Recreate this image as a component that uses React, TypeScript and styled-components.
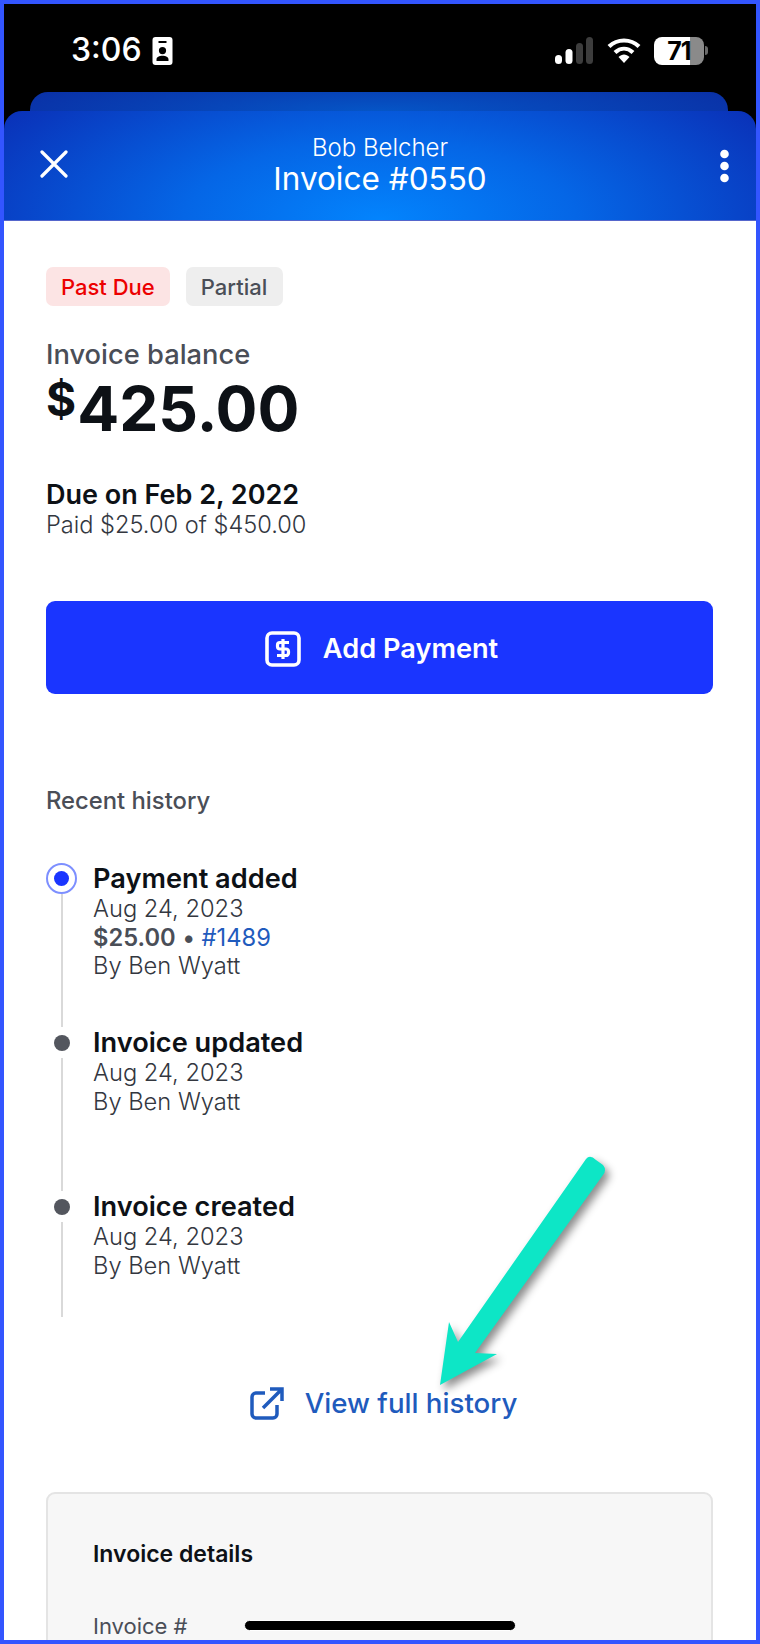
import React from 'react';
import styled, { createGlobalStyle } from 'styled-components';

const GlobalStyle = createGlobalStyle`
  html, body {
    margin: 0;
    padding: 0;
    background: #fff;
  }
  * {
    box-sizing: border-box;
  }
`;

const Frame = styled.div`
  position: relative;
  width: 760px;
  height: 1644px;
  overflow: hidden;
  border: 4px solid #3355ff;
  background: #fff;
  font-family: Inter, 'Liberation Sans', sans-serif;
  color: #0d1116;
`;

const Top = styled.div`
  background: #000;
`;

const StatusBar = styled.div`
  height: 88px;
  display: flex;
  justify-content: space-between;
  padding: 29px 48px 0 67px;
  color: #fff;
`;

const StatusGroup = styled.div`
  display: flex;
  align-items: flex-start;
`;

const Clock = styled.span`
  font-size: 32px;
  line-height: 34px;
  font-weight: 500;
  margin-right: 10px;
`;

const StatusIcon = styled.svg<{ $gap?: number }>`
  margin: 4px 0 0 ${(p) => p.$gap ?? 0}px;
`;

const Battery = styled.div`
  position: relative;
  width: 50px;
  height: 28px;
  margin: 4px 0 0 13px;
  border-radius: 8px;
  overflow: hidden;
  background: linear-gradient(to right, #fff 72%, #8a8a8a 72%);
  color: #000;
  font-size: 25px;
  line-height: 28px;
  font-weight: 700;
  text-align: center;
  letter-spacing: -1px;
`;

const BatteryNub = styled.div`
  width: 3px;
  height: 9px;
  margin: 13px 0 0 1px;
  border-radius: 0 3px 3px 0;
  background: #6a6a6a;
`;

const BackTab = styled.div`
  height: 19px;
  margin: 0 28px 0 26px;
  border-radius: 18px 18px 0 0;
  background: radial-gradient(ellipse 60% 220% at 50% 100%, #0555c6 0%, #0a2ea4 100%);
`;

const Header = styled.header`
  height: 110px;
  display: grid;
  grid-template-columns: 1fr auto 1fr;
  align-items: center;
  padding: 0 36px;
  border-radius: 18px 18px 0 0;
  border-bottom: 1px solid #5566cc;
  background: radial-gradient(ellipse 62% 175% at 50% 100%, #0384fd 0%, #0566e6 42%, #0a2fb6 100%);
  color: #fff;
`;

const CloseIcon = styled.svg`
  margin-bottom: 3px;
`;

const MoreIcon = styled.svg`
  justify-self: end;
  margin-right: -9px;
`;

const HeaderTitle = styled.div`
  display: flex;
  flex-direction: column;
  align-items: center;
  margin-bottom: 2px;
`;

const Customer = styled.span`
  font-size: 24px;
  line-height: 28px;
  font-weight: 300;
`;

const InvoiceNumber = styled.span`
  font-size: 31.500px;
  line-height: 33px;
  font-weight: 400;
`;

const Main = styled.main`
  padding: 46px 43px 0 42px;
`;

const Badges = styled.div`
  display: flex;
  gap: 16px;
`;

const Badge = styled.span<{ $tone: 'danger' | 'neutral' }>`
  height: 39px;
  display: flex;
  align-items: center;
  padding: 0 ${(p) => (p.$tone === 'danger' ? 15 : 16)}px 0 15px;
  border-radius: 7px;
  font-size: 22px;
  font-weight: 500;
  background: ${(p) => (p.$tone === 'danger' ? '#fce4e4' : '#eeeeee')};
  color: ${(p) => (p.$tone === 'danger' ? '#ec0000' : '#4a4e57')};
`;

const BalanceLabel = styled.div`
  margin-top: 32px;
  font-size: 27.300px;
  line-height: 34px;
  font-weight: 500;
  color: #4a4e57;
`;

const BalanceAmount = styled.div`
  display: flex;
  align-items: flex-start;
  height: 64px;
  margin-top: 5px;
  font-size: 62.200px;
  line-height: 64px;
  font-weight: 700;
`;

const Currency = styled.span`
  font-size: 46px;
  line-height: 44px;
  margin-right: 1px;
`;

const DueDate = styled.div`
  margin-top: 37px;
  font-size: 27px;
  line-height: 33px;
  font-weight: 600;
`;

const PaidLine = styled.div`
  font-size: 23.600px;
  line-height: 28px;
  font-weight: 300;
  color: #33373f;
`;

const PayButton = styled.button`
  width: 667px;
  height: 93px;
  margin-top: 62px;
  display: flex;
  align-items: center;
  justify-content: center;
  gap: 22px;
  padding: 2px 0 0 4px;
  border: none;
  border-radius: 9px;
  background: #1a35ff;
  color: #fff;
  font-family: inherit;
  font-size: 27.200px;
  font-weight: 600;
`;

const SectionLabel = styled.div`
  margin-top: 93px;
  font-size: 23.800px;
  line-height: 28px;
  font-weight: 500;
  color: #4a4e57;
`;

const Timeline = styled.ol`
  list-style: none;
  margin: 48px 0 0;
  padding: 0;
`;

const Item = styled.li`
  display: grid;
  grid-template-columns: 31px 1fr;
  column-gap: 16px;
  height: 164px;
`;

const Rail = styled.div`
  display: flex;
  flex-direction: column;
  align-items: center;
`;

const Node = styled.span<{ $active?: boolean }>`
  flex: none;
  display: flex;
  align-items: center;
  justify-content: center;
  width: ${(p) => (p.$active ? 31 : 16)}px;
  height: ${(p) => (p.$active ? 31 : 16)}px;
  margin-top: ${(p) => (p.$active ? 0 : 8)}px;
  border-radius: 50%;
  background: ${(p) => (p.$active ? '#fff' : '#53565e')};
  border: ${(p) => (p.$active ? '2px solid #7d8fff' : 'none')};
`;

const NodeCore = styled.span`
  width: 15px;
  height: 15px;
  border-radius: 50%;
  background: #1a35ff;
`;

const RailLine = styled.span<{ $top: number; $bottom: number }>`
  width: 2px;
  flex: 1;
  margin-top: ${(p) => p.$top}px;
  margin-bottom: ${(p) => p.$bottom}px;
  background: #d9d9d9;
`;

const ItemTitle = styled.div`
  font-size: 27.200px;
  line-height: 31px;
  margin-bottom: 1px;
  font-weight: 600;
`;

const ItemLine = styled.div`
  font-size: 23.700px;
  line-height: 28.500px;
  font-weight: 300;
  color: #33373f;
`;

const Amount = styled.span`
  font-weight: 600;
  color: #4a4e57;
`;

const Dot = styled.span`
  font-weight: 600;
  color: #4a4e57;
  margin: 0 7px;
`;

const InvoiceRef = styled.span`
  font-weight: 400;
  color: #1f5bbd;
`;

const HistoryLink = styled.div`
  display: flex;
  align-items: center;
  justify-content: center;
  gap: 21px;
  margin-top: 31px;
  margin-left: 8px;
  color: #1f5bbd;
  font-size: 27.700px;
  line-height: 34px;
  font-weight: 550;
`;

const DetailsCard = styled.section`
  width: 667px;
  height: 300px;
  margin-top: 72px;
  padding: 46px 45px;
  border: 2px solid #e4e4e4;
  border-radius: 9px;
  background: #f7f7f7;
`;

const DetailsTitle = styled.div`
  font-size: 23px;
  line-height: 28px;
  font-weight: 600;
`;

const DetailsKey = styled.div`
  margin-top: 44px;
  font-size: 22px;
  line-height: 28px;
  color: #4a4e57;
`;

const HomeBar = styled.div`
  position: absolute;
  left: 240px;
  bottom: 9px;
  width: 272px;
  height: 11px;
  border-radius: 6px;
  border: 1px solid #fff;
  background: #000;
`;

const Annotation = styled.svg`
  position: absolute;
  left: 0;
  top: 0;
  width: 752px;
  height: 1636px;
  pointer-events: none;
  filter: drop-shadow(4px 5px 4px rgba(0, 0, 0, 0.45));
`;

const history = [
  { title: 'Invoice updated', top: 7, bottom: 0 },
  { title: 'Invoice created', top: 7, bottom: 38 },
];

const App: React.FC = () => {
  return (
    <Frame>
      <GlobalStyle />
      <Top>
        <StatusBar>
          <StatusGroup>
            <Clock>3:06</Clock>
            <StatusIcon width='21' height='28' viewBox='0 0 20 28'>
              <path
                fill='#fff'
                fillRule='evenodd'
                d='M3 0h14a3 3 0 0 1 3 3v22a3 3 0 0 1-3 3H3a3 3 0 0 1-3-3V3a3 3 0 0 1 3-3zM6 4v2h8V4zM10 10a3.6 3.6 0 1 0 0 7.2A3.6 3.6 0 0 0 10 10zM4 24h12v-1.6c0-2.4-2.7-3.6-6-3.6s-6 1.200-6 3.600z'
              />
            </StatusIcon>
          </StatusGroup>
          <StatusGroup>
            <StatusIcon width='38' height='28' viewBox='0 0 38 28'>
              <rect x='0' y='18' width='7' height='9' rx='3.500' fill='#fff' />
              <rect x='10.500' y='12' width='7' height='15' rx='3.500' fill='#fff' />
              <rect x='21' y='6' width='7' height='21' rx='3.500' fill='#3d3d3d' />
              <rect x='31' y='0' width='7' height='27' rx='3.500' fill='#3d3d3d' />
            </StatusIcon>
            <StatusIcon $gap={14} width='34' height='26' viewBox='0 0 34 26'>
              <path
                d='M2 9.500C10.500 1.500 23.500 1.500 32 9.500M8 15.500C13.500 10.500 20.500 10.500 26 15.500'
                fill='none'
                stroke='#fff'
                strokeWidth='4.200'
              />
              <path d='M11.500 20C15 16.500 19 16.500 22.500 20L17 26z' fill='#fff' />
            </StatusIcon>
            <Battery>71</Battery>
            <BatteryNub />
          </StatusGroup>
        </StatusBar>
        <BackTab />
        <Header>
          <CloseIcon width='28' height='28' viewBox='0 0 28 28'>
            <path d='M2 2l24 24M26 2L2 26' stroke='#fff' strokeWidth='3.200' strokeLinecap='round' />
          </CloseIcon>
          <HeaderTitle>
            <Customer>Bob Belcher</Customer>
            <InvoiceNumber>Invoice #0550</InvoiceNumber>
          </HeaderTitle>
          <MoreIcon width='9' height='34' viewBox='0 0 9 34'>
            <circle cx='4.500' cy='5' r='4.300' fill='#fff' />
            <circle cx='4.500' cy='17' r='4.300' fill='#fff' />
            <circle cx='4.500' cy='29' r='4.300' fill='#fff' />
          </MoreIcon>
        </Header>
      </Top>
      <Main>
        <Badges>
          <Badge $tone='danger'>Past Due</Badge>
          <Badge $tone='neutral'>Partial</Badge>
        </Badges>
        <BalanceLabel>Invoice balance</BalanceLabel>
        <BalanceAmount>
          <Currency>$</Currency>425.00
        </BalanceAmount>
        <DueDate>Due on Feb 2, 2022</DueDate>
        <PaidLine>Paid $25.00 of $450.00</PaidLine>
        <PayButton>
          <svg width='36' height='36' viewBox='0 0 36 36'>
            <rect x='2' y='2' width='32' height='32' rx='5' fill='none' stroke='#fff' strokeWidth='3.600' />
            <path
              d='M24 11.500h-9a2.500 2.500 0 0 0-2.500 2.500v1.500a2.500 2.500 0 0 0 2.500 2.500h6a2.500 2.500 0 0 1 2.500 2.500v1.500a2.500 2.500 0 0 1-2.500 2.500h-9M18 8v20'
              fill='none'
              stroke='#fff'
              strokeWidth='3.200'
            />
          </svg>
          Add Payment
        </PayButton>
        <SectionLabel>Recent history</SectionLabel>
        <Timeline>
          <Item>
            <Rail>
              <Node $active>
                <NodeCore />
              </Node>
              <RailLine $top={0} $bottom={0} />
            </Rail>
            <div>
              <ItemTitle>Payment added</ItemTitle>
              <ItemLine>Aug 24, 2023</ItemLine>
              <ItemLine>
                <Amount>$25.00</Amount>
                <Dot>•</Dot>
                <InvoiceRef>#1489</InvoiceRef>
              </ItemLine>
              <ItemLine>By Ben Wyatt</ItemLine>
            </div>
          </Item>
          {history.map((h) => (
            <Item key={h.title}>
              <Rail>
                <Node />
                <RailLine $top={h.top} $bottom={h.bottom} />
              </Rail>
              <div>
                <ItemTitle>{h.title}</ItemTitle>
                <ItemLine>Aug 24, 2023</ItemLine>
                <ItemLine>By Ben Wyatt</ItemLine>
              </div>
            </Item>
          ))}
        </Timeline>
        <HistoryLink>
          <svg width='34' height='33' viewBox='0 0 34 33' fill='none' stroke='#1f5bbd' strokeWidth='3.500'>
            <path d='M15 6H6a4 4 0 0 0-4 4v17a4 4 0 0 0 4 4h17a4 4 0 0 0 4-4v-9' />
            <path d='M13 21L31 3M20 2h12v12' />
          </svg>
          View full history
        </HistoryLink>
        <DetailsCard>
          <DetailsTitle>Invoice details</DetailsTitle>
          <DetailsKey>Invoice #</DetailsKey>
        </DetailsCard>
      </Main>
      <HomeBar />
      <Annotation viewBox='0 0 752 1636'>
        <path
          fill='#0de6c6'
          d='M436 1381L445 1318L454 1338L582 1155Q586 1150 592 1156L599 1161Q603 1166 599 1171L471 1349L493 1350z'
        />
      </Annotation>
    </Frame>
  );
};

export default App;
